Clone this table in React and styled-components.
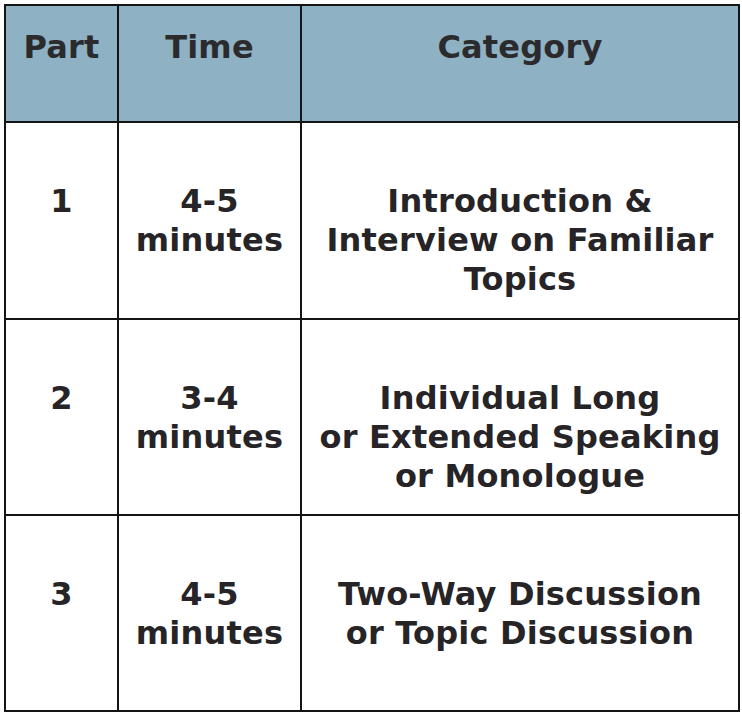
import React from "react";
import styled, { createGlobalStyle } from "styled-components";

const Global = createGlobalStyle`
  html, body { margin: 0; padding: 0; background: #ffffff; }
  body { font-family: "DejaVu Sans", Verdana, sans-serif; }
`;

const Table = styled.div`
  margin: 4px 0 0 4px;
  width: 736px;
  box-sizing: border-box;
  border: 2px solid #141414;
  display: grid;
  grid-template-columns: 113px 183px 436px;
  grid-template-rows: 117px 197px 196px 194px;
`;

const Cell = styled.div`
  box-sizing: border-box;
  border-right: ${(p) => (p.$last ? "none" : "2px solid #141414")};
  border-bottom: ${(p) => (p.$bottom ? "none" : "2px solid #141414")};
  background: ${(p) => (p.$head ? "#8fb1c4" : "#ffffff")};
  padding-top: ${(p) => (p.$head ? "22px" : "59px")};
  text-align: center;
  font-family: "DejaVu Sans", Verdana, sans-serif;
  font-weight: bold;
  font-size: 32px;
  line-height: 39px;
  color: ${(p) => (p.$head ? "#2b2a2c" : "#262426")};
  letter-spacing: 0.2px;
`;

const headers = ["Part", "Time", "Category"];
const rows = [
  ["1", ["4-5", "minutes"], ["Introduction &", "Interview on Familiar", "Topics"]],
  ["2", ["3-4", "minutes"], ["Individual Long", "or Extended Speaking", "or Monologue"]],
  ["3", ["4-5", "minutes"], ["Two-Way Discussion", "or Topic Discussion"]],
];

const Lines = ({ items }) =>
  items.map((t, i) => (
    <React.Fragment key={i}>
      {i > 0 && <br />}
      {t}
    </React.Fragment>
  ));

export default function App() {
  return (
    <>
      <Global />
      <Table>
        {headers.map((h, i) => (
          <Cell key={h} $head $last={i === 2}>
            {h}
          </Cell>
        ))}
        {rows.map((r, ri) => (
          <React.Fragment key={ri}>
            <Cell $bottom={ri === rows.length - 1}>{r[0]}</Cell>
            <Cell $bottom={ri === rows.length - 1}>
              <Lines items={r[1]} />
            </Cell>
            <Cell $bottom={ri === rows.length - 1} $last>
              <Lines items={r[2]} />
            </Cell>
          </React.Fragment>
        ))}
      </Table>
    </>
  );
}
